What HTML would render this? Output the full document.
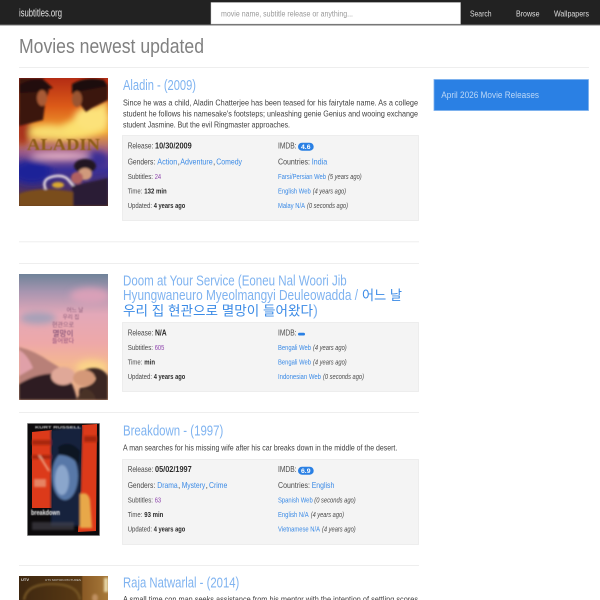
<!DOCTYPE html>
<html><head><meta charset="utf-8"><style>
html,body{margin:0;padding:0;background:#fff;width:600px;height:600px;overflow:hidden}
svg{display:block;filter:blur(.3px)}
text{font-family:"Liberation Sans","Noto Sans CJK KR",sans-serif;font-size:8.2px;fill:#4a4a4a;white-space:pre}
.s{font-size:7px}
.b{font-weight:bold;fill:#2b2b2b}
.a{fill:#3a8ae6}
.i{font-style:italic;fill:#4a4a4a}
.p{fill:#8e44ad}
.h{font-size:14.6px;fill:#7fb3f0}
.k{font-size:13.6px;fill:#3a8ae6}
.w{font-weight:bold;fill:#fff;font-size:6.8px}
.n{fill:#ddd}
.para{fill:#3f3f3f;font-size:8.1px}
</style></head><body>
<svg xmlns="http://www.w3.org/2000/svg" width="600" height="600" viewBox="0 0 600 600">
<defs>
<filter id="bl1" x="-20%" y="-20%" width="140%" height="140%"><feGaussianBlur stdDeviation="1"/></filter>
<filter id="bl2" x="-30%" y="-30%" width="160%" height="160%"><feGaussianBlur stdDeviation="3.5"/></filter>
<filter id="bl0"><feGaussianBlur stdDeviation="0.4"/></filter>
<linearGradient id="g1" x1="0" y1="0" x2="0" y2="1"><stop offset="0" stop-color="#b42c14"/><stop offset=".22" stop-color="#dc5a18"/><stop offset=".42" stop-color="#f0a030"/><stop offset=".58" stop-color="#9a5a88"/><stop offset=".72" stop-color="#3a3098"/><stop offset=".86" stop-color="#4a3068"/><stop offset="1" stop-color="#6a3c18"/></linearGradient>
<linearGradient id="g2" x1="0" y1="0" x2="0" y2="1"><stop offset="0" stop-color="#6f8399"/><stop offset=".14" stop-color="#a795b0"/><stop offset=".32" stop-color="#e3a8b8"/><stop offset=".55" stop-color="#eea8a8"/><stop offset=".72" stop-color="#f4b890"/><stop offset="1" stop-color="#e0a888"/></linearGradient>
<linearGradient id="g4" x1="0" y1="0" x2="1" y2="0"><stop offset="0" stop-color="#3e2710"/><stop offset=".7" stop-color="#5a3a14"/><stop offset=".72" stop-color="#8a5a25"/><stop offset="1" stop-color="#a87a3a"/></linearGradient>
<clipPath id="c1"><rect x="19" y="78" width="89" height="128"/></clipPath>
<clipPath id="c2"><rect x="19" y="274" width="89" height="126"/></clipPath>
<clipPath id="c3"><rect x="27.5" y="423.5" width="72" height="112"/></clipPath>
<clipPath id="c4"><rect x="19" y="576" width="89" height="24"/></clipPath>
</defs>

<!-- header -->
<rect width="600" height="24.5" fill="#222"/>
<rect y="24.5" width="600" height="1" fill="#777"/>
<text x="19" y="16.5" textLength="43" lengthAdjust="spacingAndGlyphs" style="font-size:10.6px;fill:#e4e4e4">isubtitles.org</text>
<rect x="211" y="2.5" width="249.5" height="21.5" fill="#fff" stroke="#ccc" stroke-width=".5"/>
<text x="221" y="16.5" textLength="132" lengthAdjust="spacingAndGlyphs" style="font-size:7.8px;fill:#999">movie name, subtitle release or anything...</text>
<text class="n" x="470" y="16.5" textLength="21.5" lengthAdjust="spacingAndGlyphs">Search</text>
<text class="n" x="516" y="16.5" textLength="23.5" lengthAdjust="spacingAndGlyphs">Browse</text>
<text class="n" x="554" y="16.5" textLength="35" lengthAdjust="spacingAndGlyphs">Wallpapers</text>

<text x="19" y="53" textLength="185" lengthAdjust="spacingAndGlyphs" style="font-size:20px;fill:#808080">Movies newest updated</text>
<rect x="19" y="67" width="570" height="1" fill="#eee"/>

<!-- sidebar -->
<rect x="434" y="79.5" width="154.5" height="31" fill="#2a80e4" stroke="#7ab0ee" stroke-width=".8"/>
<text x="441.3" y="98" textLength="97.7" lengthAdjust="spacingAndGlyphs" style="font-size:9px;fill:#bcd7f7">April 2026 Movie Releases</text>

<!-- poster 1 -->
<g clip-path="url(#c1)">
<rect x="19" y="78" width="89" height="128" fill="url(#g1)"/>
<g filter="url(#bl2)">
<path d="M108 100v30q-30 14-62 8q-10-2-14-8q20 2 40-10q20-12 36-20z" fill="#fbe070"/>
<ellipse cx="92" cy="118" rx="18" ry="12" fill="#fce27a"/>
<ellipse cx="48" cy="132" rx="20" ry="7" fill="#f8dc70"/>
<ellipse cx="22" cy="128" rx="8" ry="18" fill="#a8301a"/>
<ellipse cx="95" cy="160" rx="14" ry="9" fill="#3a2f95"/>
<ellipse cx="32" cy="172" rx="20" ry="12" fill="#1a2498"/>
<ellipse cx="60" cy="156" rx="30" ry="4" fill="#e4b0c4"/>
</g>
<g filter="url(#bl1)">
<path d="M19 78h24l6 12-4 14-2 16-24 6z" fill="#3a120c"/>
<path d="M19 85q14-8 26-4l8 7-16 4-18 1z" fill="#241009"/>
<path d="M72 84q14-8 32-4l4 6-22 8-14 0z" fill="#1a0a08"/>
<path d="M76 92l32-6v14l-16 8-6 4-6-8z" fill="#3a1410"/>
<ellipse cx="42" cy="98" rx="5" ry="8" fill="#a85a34"/>
<ellipse cx="77" cy="99" rx="5" ry="8" fill="#9a5530"/>
<path d="M46 190q-6-12 10-14q10-1 14 6q6 8 18 12" stroke="#e8dce0" stroke-width="2.5" fill="none"/>
<ellipse cx="85" cy="166" rx="11" ry="7" fill="#241820"/>
<ellipse cx="85" cy="174" rx="7" ry="6" fill="#d09a7c"/>
<ellipse cx="77" cy="178" rx="6" ry="6" fill="#b06060"/>
<path d="M72 186l36-8v28H72z" fill="#2b1a35"/>
<path d="M19 194q20-8 54-2v14H19z" fill="#7a4e1c"/>
<ellipse cx="58" cy="185" rx="6" ry="3" fill="#d8a830"/>
</g>
<text x="27" y="150" textLength="73" lengthAdjust="spacingAndGlyphs" filter="url(#bl0)" style="font-family:'Liberation Serif',serif;font-weight:bold;font-size:17px;fill:#8f5f18">ALADIN</text>
</g>

<!-- item 1 -->
<text class="h" x="123" y="90" textLength="73" lengthAdjust="spacingAndGlyphs">Aladin - (2009)</text>
<text class="para" x="123" y="105.5" textLength="295" lengthAdjust="spacingAndGlyphs">Since he was a child, Aladin Chatterjee has been teased for his fairytale name. As a college</text>
<text class="para" x="123" y="116.5" textLength="295" lengthAdjust="spacingAndGlyphs">student he follows his namesake's footsteps; unleashing genie Genius and wooing exchange</text>
<text class="para" x="123" y="127.5" textLength="167" lengthAdjust="spacingAndGlyphs">student Jasmine. But the evil Ringmaster approaches.</text>
<rect x="122.5" y="135.5" width="296" height="85" fill="#f4f4f4" stroke="#eaeaea" stroke-width=".8"/>

<text x="127.7" y="148.7" textLength="25.6" lengthAdjust="spacingAndGlyphs">Release:</text>
<text class="b" x="155" y="148.7" textLength="36.7" lengthAdjust="spacingAndGlyphs">10/30/2009</text>
<text x="278" y="148.7" textLength="18.5" lengthAdjust="spacingAndGlyphs">IMDB:</text>
<rect x="298" y="142.7" width="15.7" height="8" rx="4" fill="#2a80e4"/>
<text class="w" x="301" y="149.2" textLength="9.5" lengthAdjust="spacingAndGlyphs">4.6</text>

<text x="127.7" y="164.7" textLength="27.5" lengthAdjust="spacingAndGlyphs">Genders:</text>
<text class="a" x="157.3" y="164.7" textLength="20" lengthAdjust="spacingAndGlyphs">Action</text>
<text x="177.6" y="164.7">,</text>
<text class="a" x="180.3" y="164.7" textLength="32.4" lengthAdjust="spacingAndGlyphs">Adventure</text>
<text x="213" y="164.7">,</text>
<text class="a" x="216.3" y="164.7" textLength="25.7" lengthAdjust="spacingAndGlyphs">Comedy</text>
<text x="278" y="164.7" textLength="32" lengthAdjust="spacingAndGlyphs">Countries:</text>
<text class="a" x="311.7" y="164.7" textLength="15.6" lengthAdjust="spacingAndGlyphs">India</text>

<text class="s" x="127.7" y="179" textLength="25.3" lengthAdjust="spacingAndGlyphs">Subtitles:</text>
<text class="s p" x="154.7" y="179" textLength="6.4" lengthAdjust="spacingAndGlyphs">24</text>
<text class="s a" x="278" y="179" textLength="48" lengthAdjust="spacingAndGlyphs">Farsi/Persian Web</text>
<text class="s i" x="328" y="179" textLength="33.7" lengthAdjust="spacingAndGlyphs">(5 years ago)</text>

<text class="s" x="127.7" y="193.7" textLength="14.6" lengthAdjust="spacingAndGlyphs">Time:</text>
<text class="s b" x="144.3" y="193.7" textLength="22.4" lengthAdjust="spacingAndGlyphs">132 min</text>
<text class="s a" x="278" y="193.7" textLength="32.7" lengthAdjust="spacingAndGlyphs">English Web</text>
<text class="s i" x="312.7" y="193.7" textLength="33.3" lengthAdjust="spacingAndGlyphs">(4 years ago)</text>

<text class="s" x="127.7" y="208" textLength="24.3" lengthAdjust="spacingAndGlyphs">Updated:</text>
<text class="s b" x="153.7" y="208" textLength="31.6" lengthAdjust="spacingAndGlyphs">4 years ago</text>
<text class="s a" x="278" y="208" textLength="27" lengthAdjust="spacingAndGlyphs">Malay N/A</text>
<text class="s i" x="307" y="208" textLength="41" lengthAdjust="spacingAndGlyphs">(0 seconds ago)</text>

<rect x="19" y="241.3" width="400" height="1" fill="#eee"/>
<rect x="19" y="263" width="400" height="1" fill="#eee"/>

<!-- poster 2 -->
<g clip-path="url(#c2)">
<rect x="19" y="274" width="89" height="126" fill="url(#g2)"/>
<g filter="url(#bl2)">
<ellipse cx="38" cy="318" rx="18" ry="6" fill="#a5a0b8"/>
<ellipse cx="90" cy="296" rx="20" ry="8" fill="#d9a0b8"/>
<ellipse cx="92" cy="368" rx="16" ry="8" fill="#fbd488"/>
</g>
<g filter="url(#bl1)">
<path d="M19 347q16 4 30 14q10 6 16 10l-20 12-26 2z" fill="#b88078"/>
<path d="M19 350q8 4 14 18l-14 8z" fill="#e0a0a8"/>
<path d="M19 384q20-12 38-10l14 8q4 8 6 18H19z" fill="#2d1d22"/>
<ellipse cx="63" cy="376" rx="12" ry="9" fill="#e0a898"/>
<path d="M84 370q16-6 24 6v24H80q-2-8 0-12q14-2 16-10z" fill="#3a2620"/>
<ellipse cx="84" cy="378" rx="11" ry="8" fill="#d49878"/>
<path d="M84 388q10 2 12 12H76z" fill="#4a3228"/>
</g>
<text x="75" y="312" text-anchor="middle" filter="url(#bl0)" style="font-size:5.5px;fill:#8a5a78">어느 날</text>
<text x="71" y="319" text-anchor="middle" filter="url(#bl0)" style="font-size:5.5px;fill:#8a5a78">우리 집</text>
<text x="63" y="327" text-anchor="middle" filter="url(#bl0)" style="font-size:6px;fill:#8a5a78">현관으로</text>
<text x="63" y="336" text-anchor="middle" filter="url(#bl0)" style="font-size:7.5px;fill:#6a3a68">멸망이</text>
<text x="63" y="343" text-anchor="middle" filter="url(#bl0)" style="font-size:6px;fill:#8a4a78">들어왔다</text>
</g>

<!-- item 2 -->
<text class="h" x="123" y="285.5" textLength="223.7" lengthAdjust="spacingAndGlyphs">Doom at Your Service (Eoneu Nal Woori Jib</text>
<text class="h" x="123" y="300" textLength="235" lengthAdjust="spacingAndGlyphs">Hyungwaneuro Myeolmangyi Deuleowadda /</text>
<text class="k" x="362" y="300" textLength="40" lengthAdjust="spacingAndGlyphs">어느 날</text>
<text class="k" x="123" y="315.5" textLength="190" lengthAdjust="spacingAndGlyphs">우리 집 현관으로 멸망이 들어왔다</text>
<text class="h" x="313" y="315.5" textLength="5" lengthAdjust="spacingAndGlyphs">)</text>
<rect x="122.5" y="322.5" width="296" height="69" fill="#f4f4f4" stroke="#eaeaea" stroke-width=".8"/>

<text x="127.7" y="335.3" textLength="25.6" lengthAdjust="spacingAndGlyphs">Release:</text>
<text class="b" x="155" y="335.3" textLength="11.7" lengthAdjust="spacingAndGlyphs">N/A</text>
<text x="278" y="335.3" textLength="18.5" lengthAdjust="spacingAndGlyphs">IMDB:</text>
<rect x="298" y="332.7" width="7" height="2.8" rx="1.4" fill="#2a80e4"/>

<text class="s" x="127.7" y="350" textLength="25.3" lengthAdjust="spacingAndGlyphs">Subtitles:</text>
<text class="s p" x="154.7" y="350" textLength="9.6" lengthAdjust="spacingAndGlyphs">605</text>
<text class="s a" x="278" y="350" textLength="33" lengthAdjust="spacingAndGlyphs">Bengali Web</text>
<text class="s i" x="313" y="350" textLength="33.7" lengthAdjust="spacingAndGlyphs">(4 years ago)</text>

<text class="s" x="127.7" y="364.7" textLength="14.6" lengthAdjust="spacingAndGlyphs">Time:</text>
<text class="s b" x="144.3" y="364.7" textLength="10.7" lengthAdjust="spacingAndGlyphs">min</text>
<text class="s a" x="278" y="364.7" textLength="33" lengthAdjust="spacingAndGlyphs">Bengali Web</text>
<text class="s i" x="313" y="364.7" textLength="33.7" lengthAdjust="spacingAndGlyphs">(4 years ago)</text>

<text class="s" x="127.7" y="379" textLength="24.3" lengthAdjust="spacingAndGlyphs">Updated:</text>
<text class="s b" x="153.7" y="379" textLength="31.6" lengthAdjust="spacingAndGlyphs">4 years ago</text>
<text class="s a" x="278" y="379" textLength="43" lengthAdjust="spacingAndGlyphs">Indonesian Web</text>
<text class="s i" x="323" y="379" textLength="41" lengthAdjust="spacingAndGlyphs">(0 seconds ago)</text>

<rect x="19" y="412" width="400" height="1" fill="#eee"/>

<!-- poster 3 -->
<g clip-path="url(#c3)">
<rect x="27.5" y="423.5" width="72" height="112" fill="#0c0a0c"/>
<path d="M32 432l20-2v78H32z" fill="#dc3a1a"/>
<path d="M82 425l15-1-1 107-18 1 2-38z" fill="#dc3a1a"/>
<g filter="url(#bl1)">
<path d="M32 440h20v5H32zM32 455h20v4H32z" fill="#a82510"/>
<path d="M84 436h13v6H84z" fill="#a82510"/>
<path d="M51 430l31-4-2 100H51z" fill="#16243e"/>
<ellipse cx="65" cy="476" rx="13" ry="24" fill="#5878a8"/>
<ellipse cx="62" cy="480" rx="7" ry="15" fill="#8ba6cc"/>
<path d="M58 447q12-8 22 4l-1 14q-8-10-20-10z" fill="#0e1420"/>
<path d="M80 494q8-3 10 6l2 28h-12z" fill="#e8a848"/>
<path d="M39 455l10 16" stroke="#f0b898" stroke-width="1.5"/>
<rect x="34" y="479" width="12" height="8" fill="#f0c0a0" opacity=".55"/>
</g>
<text x="31" y="515" textLength="29" lengthAdjust="spacingAndGlyphs" filter="url(#bl0)" style="font-size:7.5px;font-weight:bold;fill:#f0f0f0">breakdown</text>
<rect x="32" y="522" width="42" height="8" fill="#4a4650" opacity=".6" filter="url(#bl1)"/>
<text x="35" y="428.5" textLength="46" lengthAdjust="spacingAndGlyphs" filter="url(#bl0)" style="font-size:3.5px;font-weight:bold;fill:#ccc">KURT RUSSELL</text>
</g>
<rect x="27.5" y="423.5" width="72" height="112" fill="none" stroke="#777" stroke-width=".7"/>

<!-- item 3 -->
<text class="h" x="123" y="435.5" textLength="100.3" lengthAdjust="spacingAndGlyphs">Breakdown - (1997)</text>
<text class="para" x="123" y="450.7" textLength="274.3" lengthAdjust="spacingAndGlyphs">A man searches for his missing wife after his car breaks down in the middle of the desert.</text>
<rect x="122.5" y="459.5" width="296" height="85" fill="#f4f4f4" stroke="#eaeaea" stroke-width=".8"/>

<text x="127.7" y="472" textLength="25.6" lengthAdjust="spacingAndGlyphs">Release:</text>
<text class="b" x="155" y="472" textLength="36.7" lengthAdjust="spacingAndGlyphs">05/02/1997</text>
<text x="278" y="472" textLength="18.5" lengthAdjust="spacingAndGlyphs">IMDB:</text>
<rect x="298" y="466.7" width="15.7" height="8" rx="4" fill="#2a80e4"/>
<text class="w" x="301" y="473.2" textLength="9.5" lengthAdjust="spacingAndGlyphs">6.9</text>

<text x="127.7" y="488" textLength="27.5" lengthAdjust="spacingAndGlyphs">Genders:</text>
<text class="a" x="157.3" y="488" textLength="20.4" lengthAdjust="spacingAndGlyphs">Drama</text>
<text x="178" y="488">,</text>
<text class="a" x="181.7" y="488" textLength="23.6" lengthAdjust="spacingAndGlyphs">Mystery</text>
<text x="205.6" y="488">,</text>
<text class="a" x="209" y="488" textLength="18.3" lengthAdjust="spacingAndGlyphs">Crime</text>
<text x="278" y="488" textLength="32" lengthAdjust="spacingAndGlyphs">Countries:</text>
<text class="a" x="311.7" y="488" textLength="22.6" lengthAdjust="spacingAndGlyphs">English</text>

<text class="s" x="127.7" y="502.3" textLength="25.3" lengthAdjust="spacingAndGlyphs">Subtitles:</text>
<text class="s p" x="154.7" y="502.3" textLength="6.4" lengthAdjust="spacingAndGlyphs">63</text>
<text class="s a" x="278" y="502.3" textLength="34.7" lengthAdjust="spacingAndGlyphs">Spanish Web</text>
<text class="s i" x="314.3" y="502.3" textLength="41.4" lengthAdjust="spacingAndGlyphs">(0 seconds ago)</text>

<text class="s" x="127.7" y="517" textLength="14.6" lengthAdjust="spacingAndGlyphs">Time:</text>
<text class="s b" x="144.3" y="517" textLength="19" lengthAdjust="spacingAndGlyphs">93 min</text>
<text class="s a" x="278" y="517" textLength="30.7" lengthAdjust="spacingAndGlyphs">English N/A</text>
<text class="s i" x="310.7" y="517" textLength="33.3" lengthAdjust="spacingAndGlyphs">(4 years ago)</text>

<text class="s" x="127.7" y="531.5" textLength="24.3" lengthAdjust="spacingAndGlyphs">Updated:</text>
<text class="s b" x="153.7" y="531.5" textLength="31.6" lengthAdjust="spacingAndGlyphs">4 years ago</text>
<text class="s a" x="278" y="531.5" textLength="42" lengthAdjust="spacingAndGlyphs">Vietnamese N/A</text>
<text class="s i" x="322" y="531.5" textLength="33.7" lengthAdjust="spacingAndGlyphs">(4 years ago)</text>

<rect x="19" y="565" width="400" height="1" fill="#eee"/>

<!-- poster 4 -->
<g clip-path="url(#c4)">
<rect x="19" y="576" width="89" height="24" fill="url(#g4)"/>
<g filter="url(#bl1)">
<path d="M24 600q2-16 28-16t28 16" fill="none" stroke="#7a5a28" stroke-width="2"/>
<rect x="104" y="578" width="4" height="14" fill="#e8d8a8"/>
<ellipse cx="95" cy="598" rx="3" ry="4" fill="#c09060"/>
</g>
<text x="21" y="581" textLength="8" lengthAdjust="spacingAndGlyphs" style="font-size:3.5px;font-weight:bold;fill:#ddd">UTV</text>
<text x="45" y="581" textLength="36" lengthAdjust="spacingAndGlyphs" style="font-size:3px;fill:#ccc">UTV MOTION PICTURES</text>
</g>

<!-- item 4 -->
<text class="h" x="123" y="587.7" textLength="116.3" lengthAdjust="spacingAndGlyphs">Raja Natwarlal - (2014)</text>
<text class="para" x="123" y="602" textLength="295" lengthAdjust="spacingAndGlyphs">A small time con man seeks assistance from his mentor with the intention of settling scores</text>
</svg>
</body></html>
